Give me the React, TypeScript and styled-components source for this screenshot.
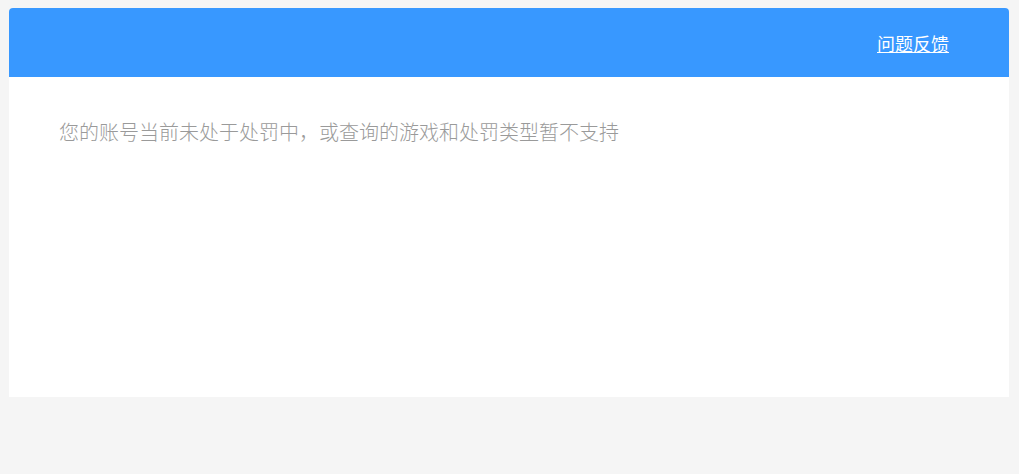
import React from "react";
import styled, { createGlobalStyle } from "styled-components";

const GlobalStyle = createGlobalStyle`
  html, body {
    margin: 0;
    padding: 0;
    background-color: #f5f5f5;
    font-family: "Noto Sans CJK SC", "Noto Sans", sans-serif;
  }
`;

const Page = styled.div`
  padding: 8px 10px 0 9px;
  min-height: 474px;
  box-sizing: border-box;
`;

const Card = styled.div`
  display: flex;
  flex-direction: column;
  background-color: #ffffff;
  border-radius: 4px 4px 0 0;
  overflow: hidden;
  height: 389px;
`;

const Header = styled.div`
  display: flex;
  align-items: center;
  justify-content: flex-end;
  height: 69px;
  padding: 0 60px;
  background-color: #3898ff;
`;

const FeedbackLink = styled.a`
  color: #ffffff;
  font-size: 18px;
  line-height: 24px;
  text-decoration: underline;
  cursor: pointer;
`;

const Body = styled.div`
  padding: 41px 50px;
`;

const Message = styled.p`
  margin: 0;
  font-size: 20px;
  font-weight: 300;
  line-height: 28px;
  color: #9a9a9a;
`;

const App: React.FC = () => {
  return (
    <>
      <GlobalStyle />
      <Page>
        <Card>
          <Header>
            <FeedbackLink>{"问题反馈"}</FeedbackLink>
          </Header>
          <Body>
            <Message>
              {"您的账号当前未处于处罚中，或查询的游戏和处罚类型暂不支持"}
            </Message>
          </Body>
        </Card>
      </Page>
    </>
  );
};

export default App;
